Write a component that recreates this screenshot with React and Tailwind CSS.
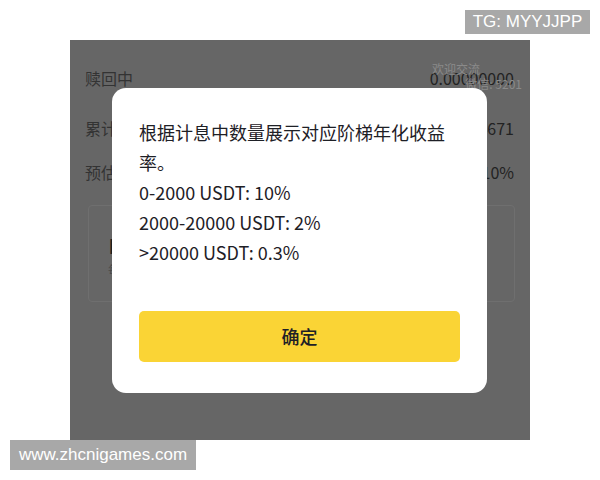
import React from 'react';

const cjk = { fontFamily: '"Noto Sans CJK SC", "Noto Sans", sans-serif' };
const latin = { fontFamily: '"Liberation Sans", Arial, sans-serif' };

// Dimmed page behind the dialog
const Row = ({ label, value, className = '' }) => (
    <div className={`flex items-center justify-between h-[24px] ${className}`}>
        <span className="text-[16px] text-[#333333]">{label}</span>
        <span className="text-[16px] text-[#222222]">{value}</span>
    </div>
);

const App = () => {
    return (
        <div className="relative w-[600px] h-[480px] bg-white overflow-hidden" style={cjk}>
            <div className="pt-[40px] pl-[70px]">
                <div className="relative w-[460px] h-[400px] bg-[#666666] pl-[15px] pr-[16px] pt-[26px]">
                    <Row label="赎回中" value="0.00000000" />
                    <Row label="累计收益" value="0.00004671" className="mt-[26px]" />
                    <Row label="预估年化" value="10%" className="mt-[20px]" />

                    <div className="mt-[21px] ml-[3px] mr-[-1px] h-[97px] border border-[#6f6f6f] rounded-[4px] pl-[19px] pt-[28px]">
                        <div className="text-[17px] font-bold text-[#1f1f1f] leading-[22px]">自动申购</div>
                        <div className="mt-[6px] text-[12px] text-[#4a4a4a] leading-[16px]">每日自动申购</div>
                    </div>

                    {/* watermark over the amount */}
                    <div className="absolute right-[8px] top-[21px] text-[12px] leading-[15px] text-[#8a8a8a] text-right">
                        <div className="pr-[42px]">欢迎交流</div>
                        <div>微信: 5201</div>
                    </div>
                </div>
            </div>

            {/* dialog */}
            <div className="absolute left-[112px] top-[88px] w-[375px] bg-white rounded-[14px] px-[27px] pt-[29px] pb-[31px]">
                <div className="text-[18px] leading-[30px] text-[#1e2026]">
                    <p>根据计息中数量展示对应阶梯年化收益率。</p>
                    <p>0-2000 USDT: 10%</p>
                    <p>2000-20000 USDT: 2%</p>
                    <p>&gt;20000 USDT: 0.3%</p>
                </div>
                <button className="mt-[44px] w-full h-[51px] rounded-[5px] bg-[#fad435] text-[18px] font-medium text-[#1e2026] flex items-center justify-center">
                    确定
                </button>
            </div>

            <div
                className="absolute left-[465px] top-[10px] w-[125px] h-[24px] bg-[#a8a8a8] text-white text-[17px] flex items-center justify-center"
                style={latin}
            >
                TG: MYYJJPP
            </div>
            <div
                className="absolute left-[10px] top-[440px] w-[186px] h-[30px] bg-[#a8a8a8] text-white text-[17px] flex items-center justify-center"
                style={latin}
            >
                www.zhcnigames.com
            </div>
        </div>
    );
};

export default App;
